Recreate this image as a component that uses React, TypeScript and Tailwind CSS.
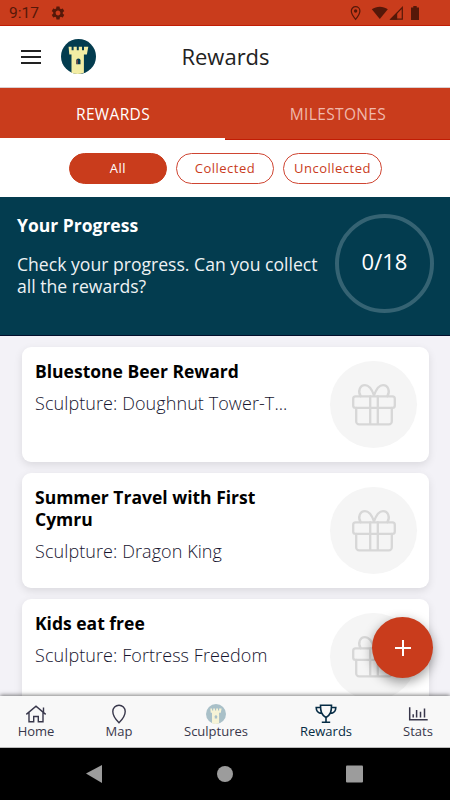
import React from "react";

type IconProps = { className?: string };

function Castle({ className, pale }: IconProps & { pale?: boolean }) {
  const disc = pale ? "#a9c0c8" : "#033c4f";
  const stone = pale ? "#f6f3d6" : "#f3eda4";
  return (
    <svg viewBox="0 0 35 35" className={className}>
      <circle cx="17.5" cy="17.5" r="17.5" fill={disc} />
      <path
        d="M7.6 7.8h3v3.4h2V7.8h3.200v3.400h2V7.800H21v3.400h2V7.800h4.300l-1.400 7.600h-3v18.400a17.400 17.400 0 0 1-12.400 0V15.400H8.300z"
        fill={stone}
      />
      <path d="M15.300 25.200v-3.600a2.100 2.100 0 0 1 4.200 0v3.600z" fill={disc} />
      {!pale && <path d="M15.600 25v-4.200h1.200V25z" fill="#8d4a43" />}
    </svg>
  );
}

function Gift() {
  return (
    <svg viewBox="0 0 44 42" className="h-[42px] w-[44px]" fill="none" stroke="#d7d7d7" strokeWidth="2.300" strokeLinejoin="round" strokeLinecap="round">
      <rect x="1.200" y="12.400" width="41.600" height="11.400" rx="2.400" />
      <path d="M4.200 23.800v13.600a3 3 0 0 0 3 3h29.600a3 3 0 0 0 3-3V23.800M18.200 12.400v28M25.800 12.400v28" />
      <path d="M8.600 12.200C5.600 7.200 7.800 1.200 13 1.200c4.800 0 7.200 5.200 9 10.200 1.800-5 4.200-10.200 9-10.200 5.200 0 7.400 6 4.400 11" />
    </svg>
  );
}

const rewards = [
  { title: "Bluestone Beer Reward", sculpture: "Sculpture: Doughnut Tower-T..." },
  { title: "Summer Travel with First Cymru", sculpture: "Sculpture: Dragon King" },
  { title: "Kids eat free", sculpture: "Sculpture: Fortress Freedom" },
];

function StatusBar() {
  return (
    <div className="flex h-[26px] shrink-0 items-center border-b border-[#c11c04] bg-[#c93c1c] text-[#551809]">
      <span className="ml-[9px] w-[41px] pt-[2px] font-['Roboto',sans-serif] text-[15.500px] leading-none">9:17</span>
      <svg viewBox="0 0 24 24" className="h-4 w-4" fill="currentColor">
        <path d="M19.140 12.940c.04-.3.060-.610.060-.940 0-.320-.020-.640-.070-.940l2.030-1.580a.49.49 0 0 0 .120-.610l-1.920-3.320a.488.488 0 0 0-.590-.220l-2.390.960c-.5-.380-1.030-.7-1.620-.940l-.360-2.540a.484.484 0 0 0-.480-.410h-3.840c-.240 0-.430.170-.470.410l-.360 2.540c-.590.240-1.130.570-1.620.940l-2.390-.960c-.220-.080-.470 0-.590.220L2.740 8.870c-.120.210-.080.470.120.610l2.030 1.580c-.050.300-.090.630-.090.940s.020.640.070.940l-2.030 1.580a.49.49 0 0 0-.120.610l1.920 3.320c.120.220.370.290.590.220l2.390-.960c.5.380 1.030.7 1.620.940l.360 2.540c.050.240.240.410.480.410h3.840c.240 0 .440-.170.470-.410l.360-2.540c.590-.240 1.130-.560 1.620-.940l2.390.960c.220.080.470 0 .590-.220l1.920-3.320c.120-.220.070-.470-.120-.610l-2.010-1.580zM12 15.600A3.610 3.610 0 0 1 8.400 12c0-1.980 1.620-3.600 3.600-3.600s3.600 1.620 3.600 3.600-1.620 3.600-3.600 3.600z" />
      </svg>
      <svg viewBox="0 0 70 16" className="mr-[30px] ml-auto h-4 w-[70px]" fill="currentColor">
        <path d="M5.600 1.700a4.300 4.300 0 0 0-4.300 4.300c0 3.200 4.300 8.300 4.300 8.300s4.300-5.100 4.300-8.300a4.300 4.300 0 0 0-4.300-4.300z" fill="none" stroke="currentColor" strokeWidth="1.200" />
        <circle cx="5.600" cy="6" r="1.700" />
        <path d="M21.800 4.200C26.500.8 33.200.8 37.800 4.200l-8 9.800z" />
        <path d="M41 14.200 52.300 2.600v11.600z" fill="none" stroke="currentColor" strokeWidth="1.200" />
        <path d="M39.600 14.800 47.200 7.500v7.300z" />
        <path d="M61 2.500h2.300V1h3.400v1.500H69V15h-8z" />
      </svg>
    </div>
  );
}

function Header() {
  return (
    <header className="grid h-[62px] shrink-0 grid-cols-[1fr_auto_1fr] items-center border-b border-[#d9d0d2] bg-white">
      <div className="flex items-center pl-[21px]">
        <div className="flex w-[20px] flex-col gap-1">
          <div className="h-[2px] bg-[#222]" />
          <div className="h-[2px] bg-[#222]" />
          <div className="h-[2px] bg-[#222]" />
        </div>
        <Castle className="ml-5 h-[35px] w-[35px]" />
      </div>
      <h1 className="pb-[2px] pl-px text-[22px] leading-none text-[#222]">Rewards</h1>
    </header>
  );
}

function Filters() {
  return (
    <div className="flex h-[57px] shrink-0 items-center justify-center gap-[9px] bg-white pl-px text-[13px] tracking-[0.500px] text-[#c93c1c]">
      <button className="h-[31px] w-[98px] rounded-full border border-[#c93c1c] bg-[#c93c1c] text-white">All</button>
      <button className="h-[31px] w-[98px] rounded-full border border-[#cf4532]">Collected</button>
      <button className="h-[31px] w-[99px] rounded-full border border-[#cf4532]">Uncollected</button>
    </div>
  );
}

function Progress() {
  return (
    <section className="flex h-[139px] shrink-0 justify-between border-b border-[#020f2c] bg-[#033c4f] pr-[16px] pl-[17px] text-white">
      <div className="w-[312px] pt-[17px]">
        <h2 className="text-[17.500px] leading-[22px] font-bold">Your Progress</h2>
        <p className="mt-[17px] text-[17.600px] leading-[22px] text-[#eef2f4]">Check your progress. Can you collect all the rewards?</p>
      </div>
      <div className="mt-[17px] flex h-[99px] w-[99px] items-center justify-center rounded-full border-4 border-[#356373] pb-[5px] text-[22px]">0/18</div>
    </section>
  );
}

function RewardCard({ title, sculpture }: { title: string; sculpture: string }) {
  return (
    <article className="flex h-[115px] shrink-0 justify-between rounded-[9px] bg-white pr-[12px] pl-[13px] shadow-[0_3px_8px_rgba(0,0,0,0.10)]">
      <div className="w-[270px] pt-[13px]">
        <h3 className="w-[240px] text-[17.500px] leading-[22px] font-bold text-black">{title}</h3>
        <p className="mt-[10px] text-[18px] leading-[22px] font-light tracking-[0.080px] whitespace-nowrap text-[#17152f]">{sculpture}</p>
      </div>
      <div className="mt-[14px] flex h-[87px] w-[87px] items-center justify-center rounded-full bg-[#f5f5f5]">
        <Gift />
      </div>
    </article>
  );
}

function BottomNav() {
  const icon = "h-5 w-[22px]";
  return (
    <nav className="relative flex h-[52px] shrink-0 border-b border-[#bbb] bg-[#f8f8f8] text-[13px] text-[#38374b] shadow-[0_-1px_4px_rgba(0,0,0,0.5)]">
      <div className="flex w-[72px] flex-col items-center pt-2">
        <svg viewBox="0 0 22 20" className={icon} fill="none" stroke="currentColor" strokeWidth="1.400">
          <path d="m1.300 10.400 9.700-8.200 9.700 8.200M4 8.500v9.200h4.700v-5.200h4.600v5.200H18V8.500M18.500 8V3.400" />
        </svg>
        <span className="-mt-px leading-[16px]">Home</span>
      </div>
      <div className="flex w-[94px] flex-col items-center pt-2">
        <svg viewBox="0 0 22 20" className={icon} fill="none" stroke="currentColor" strokeWidth="1.400">
          <path d="M11 1.200a6.200 6.200 0 0 0-6.200 6.200c0 3 2.500 7.600 6.200 11.300 3.700-3.700 6.200-8.300 6.200-11.300A6.200 6.200 0 0 0 11 1.200z" />
        </svg>
        <span className="-mt-px leading-[16px]">Map</span>
      </div>
      <div className="flex w-[100px] flex-col items-center pt-2">
        <Castle pale className="h-5 w-5" />
        <span className="-mt-px leading-[16px]">Sculptures</span>
      </div>
      <div className="flex w-[120px] flex-col items-center pt-2 text-[#062c45]">
        <svg viewBox="0 0 22 20" className={icon} fill="none" stroke="currentColor" strokeWidth="1.600">
          <path d="M5.500 1.300h11c0 6-.8 9.500-5.500 12.200C6.300 10.800 5.500 7.300 5.500 1.300zM11 13.500v4.700M6.800 18.200h8.400M5.500 3.500H1.200c0 3.800 2.200 5.800 5.700 6M16.500 3.500h4.300c0 3.800-2.200 5.800-5.700 6" />
        </svg>
        <span className="-mt-px leading-[16px]">Rewards</span>
      </div>
      <div className="flex w-[64px] flex-col items-center pt-2">
        <svg viewBox="0 0 22 20" className={icon} fill="none" stroke="currentColor" strokeWidth="1.500">
          <path d="M2.700 3.300v12.400h18M6.200 13.500v-3.200M9.600 13.500V6M13.500 13.500V7.800M17.500 13.500v-9" />
        </svg>
        <span className="-mt-px leading-[16px]">Stats</span>
      </div>
    </nav>
  );
}

export default function App() {
  return (
    <div className="relative flex h-[800px] w-[450px] flex-col overflow-hidden bg-[#f3f2f7] font-['Open_Sans',sans-serif]">
      <StatusBar />
      <Header />
      <div className="flex h-[52px] shrink-0 border-b border-[#c11c04] bg-[#c93c1c] text-[15.500px] tracking-[0.350px] text-white">
        <button className="-mb-px flex-1 border-b-2 border-white pt-[3px] pl-px">REWARDS</button>
        <button className="flex-1 pt-[2px] pl-px text-[#f0b9ac]">MILESTONES</button>
      </div>
      <Filters />
      <Progress />
      <main className="flex min-h-0 flex-1 flex-col gap-[11px] overflow-hidden pt-[11px] pr-[21px] pl-[22px]">
        {rewards.map((reward) => (
          <RewardCard key={reward.title} {...reward} />
        ))}
      </main>
      <BottomNav />
      <div className="flex h-[52px] shrink-0 items-center bg-black text-[#9c9c9c]">
        <svg viewBox="0 0 450 52" className="h-[52px] w-[450px]" fill="currentColor">
          <path d="M86 25.500 102 17v18z" />
          <circle cx="225" cy="26" r="8" />
          <rect x="346" y="17.500" width="17" height="17" rx="1" />
        </svg>
      </div>
      <button aria-label="Add" className="absolute top-[617px] left-[372px] flex h-[61px] w-[61px] items-center justify-center rounded-full bg-[#c93c1c] shadow-[0_4px_12px_rgba(0,0,0,0.4)]">
        <svg viewBox="0 0 16 16" className="h-4 w-4" stroke="white" strokeWidth="2">
          <path d="M8 0v16M0 8h16" />
        </svg>
      </button>
    </div>
  );
}
